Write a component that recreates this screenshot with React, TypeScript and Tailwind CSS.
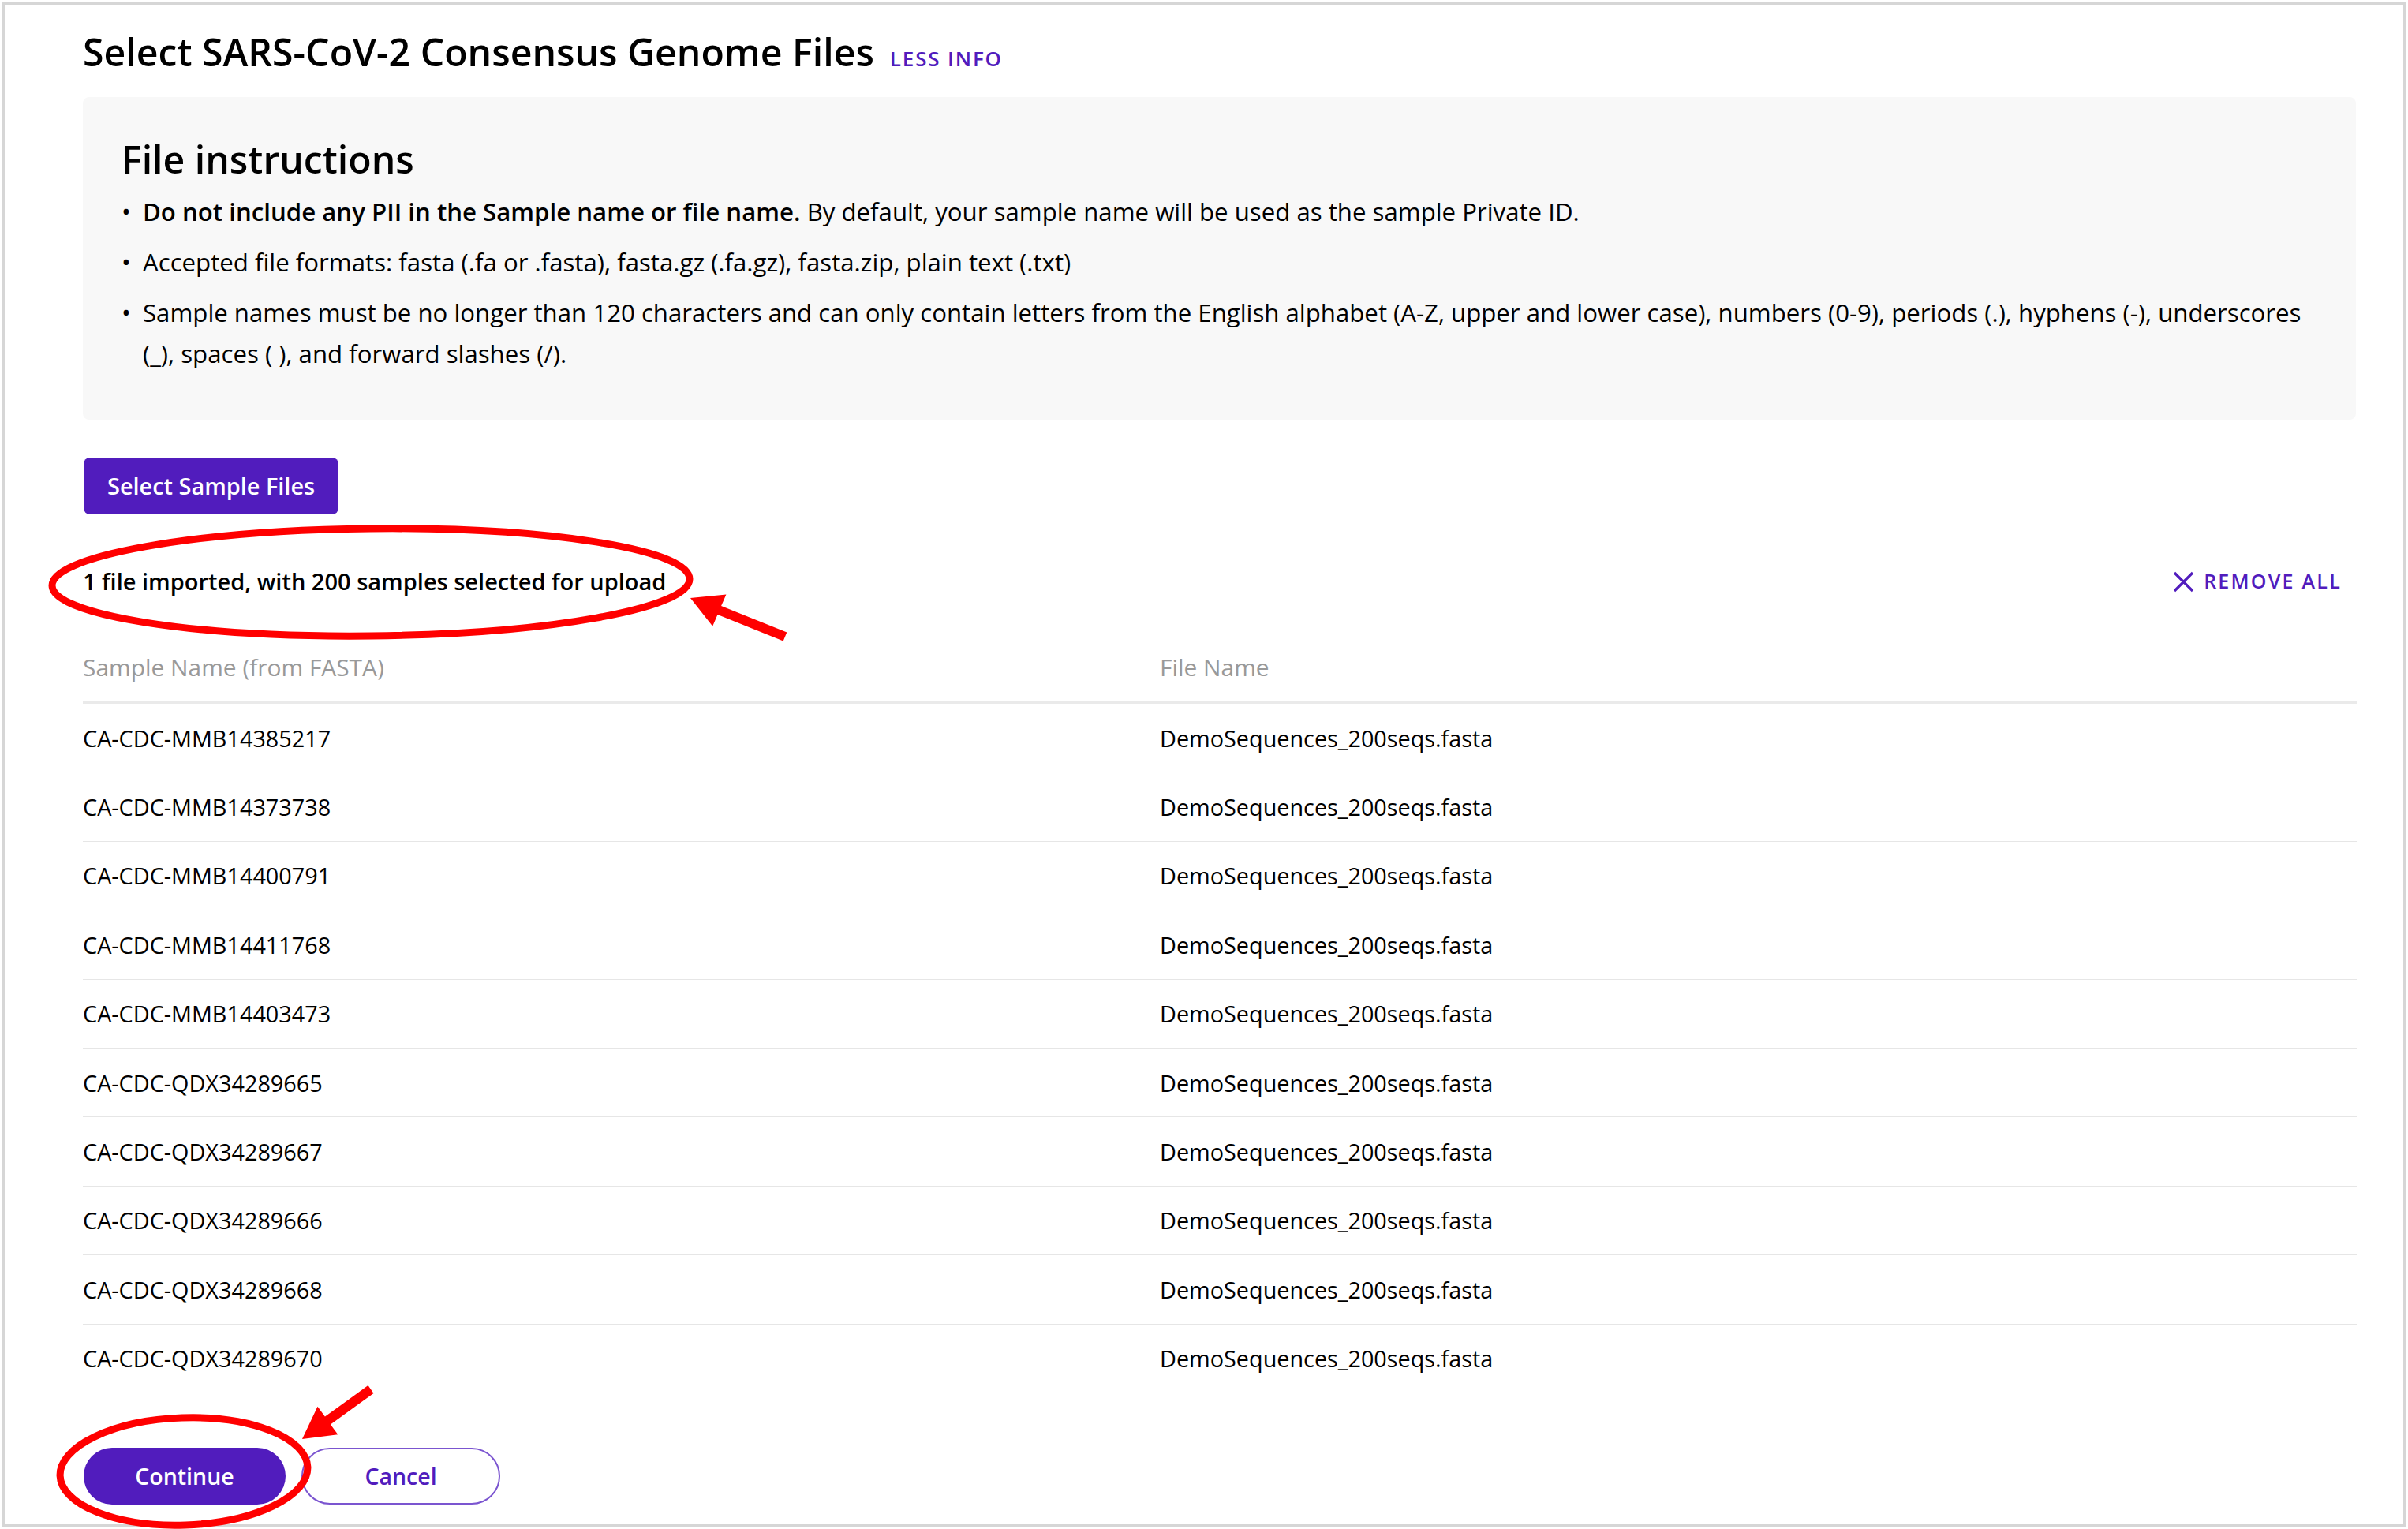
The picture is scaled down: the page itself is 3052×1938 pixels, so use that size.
import React from 'react';

const samples = [
  'CA-CDC-MMB14385217',
  'CA-CDC-MMB14373738',
  'CA-CDC-MMB14400791',
  'CA-CDC-MMB14411768',
  'CA-CDC-MMB14403473',
  'CA-CDC-QDX34289665',
  'CA-CDC-QDX34289667',
  'CA-CDC-QDX34289666',
  'CA-CDC-QDX34289668',
  'CA-CDC-QDX34289670',
];

const fileName = 'DemoSequences_200seqs.fasta';

const Bullet = ({ children }: { children: React.ReactNode }) => (
  <li className="flex">
    <span className="w-[27px] flex-shrink-0">•</span>
    <span>{children}</span>
  </li>
);

const Annotations = () => (
  <svg
    className="pointer-events-none absolute left-0 top-0"
    width={3052}
    height={1938}
    viewBox="0 0 3052 1938"
  >
    <g fill="none" stroke="#ff0000" strokeWidth={9}>
      <ellipse cx={470} cy={738} rx={404} ry={68} transform="rotate(-0.6 470 738)" />
      <ellipse cx={233} cy={1865} rx={157} ry={68} transform="rotate(-2 233 1865)" />
    </g>
    <g fill="#ff0000">
      <polygon points="875,758 920.4,753.4 914.1,768.1 997.3,801.5 992.7,812.5 909.5,779.1 903.2,793.8" />
      <polygon points="383,1824 402.5,1782.7 411.9,1795.6 466.5,1756.1 473.5,1765.9 418.9,1805.4 428.3,1818.3" />
    </g>
  </svg>
);

export default function App() {
  return (
    <div className="relative h-[1938px] w-[3052px] bg-white p-[3px] font-['Open_Sans',sans-serif] text-black">
      <div className="h-full border-[3px] border-[#d6d6d6] pl-[99px] pt-[28px]">
        <div className="w-[2882px]">
          <div className="flex items-baseline">
            <h1 className="text-[48.2px] font-semibold leading-[62px]">
              Select SARS-CoV-2 Consensus Genome Files
            </h1>
            <span className="ml-[20px] text-[26px] font-semibold uppercase tracking-[0.07em] text-[#511cbd]">
              Less info
            </span>
          </div>

          <div className="mt-[27px] w-[2881px] rounded-[8px] bg-[#f8f8f8] pb-[58px] pl-[49px] pr-[48px] pt-[47px]">
            <h2 className="text-[48.2px] font-semibold leading-[62px]">File instructions</h2>
            <ul className="mt-[10px] space-y-[12px] text-[31.2px] leading-[52px]">
              <Bullet>
                <span className="font-semibold">
                  Do not include any PII in the Sample name or file name.
                </span>{' '}
                By default, your sample name will be used as the sample Private ID.
              </Bullet>
              <Bullet>
                Accepted file formats: fasta (.fa or .fasta), fasta.gz (.fa.gz), fasta.zip, plain
                text (.txt)
              </Bullet>
              <Bullet>
                Sample names must be no longer than 120 characters and can only contain letters
                from the English alphabet (A-Z, upper and lower case), numbers (0-9), periods (.),
                hyphens (-), underscores (_), spaces ( ), and forward slashes (/).
              </Bullet>
            </ul>
          </div>

          <button className="ml-px mt-[48px] flex h-[72px] items-center rounded-[8px] bg-[#511cbd] px-[30px] text-[28.9px] font-semibold text-white">
            Select Sample Files
          </button>

          <div className="mt-[59px] flex items-center justify-between pr-[19px]">
            <span className="text-[29px] font-semibold leading-[52px]">
              1 file imported, with 200 samples selected for upload
            </span>
            <button className="flex items-center gap-[12px] text-[25px] font-semibold uppercase tracking-[0.09em] text-[#511cbd]">
              <svg width="27" height="27" viewBox="0 0 27 27" fill="none" stroke="currentColor" strokeWidth={3.2}>
                <path d="M2 2 L25 25 M25 2 L2 25" />
              </svg>
              Remove all
            </button>
          </div>

          <div className="mt-[57px]">
            <div className="flex border-b-[4px] border-[#eaeaea] pb-[16px] text-[29.9px] leading-[52px] text-[#999999]">
              <div className="w-[1365px]">Sample Name (from FASTA)</div>
              <div>File Name</div>
            </div>
            {samples.map((s) => (
              <div
                key={s}
                className="flex h-[87.4px] items-center border-b border-[#e6e6e6] text-[28.8px]"
              >
                <div className="w-[1365px]">{s}</div>
                <div>{fileName}</div>
              </div>
            ))}
          </div>

          <div className="mt-[69px] flex gap-[20px]">
            <button className="ml-px h-[72px] w-[256px] rounded-full bg-[#511cbd] text-[28.5px] font-semibold text-white">
              Continue
            </button>
            <button className="h-[72px] w-[252px] rounded-full border-2 border-[#7b55d0] text-[28.5px] font-semibold text-[#511cbd]">
              Cancel
            </button>
          </div>
        </div>
      </div>
      <Annotations />
    </div>
  );
}
